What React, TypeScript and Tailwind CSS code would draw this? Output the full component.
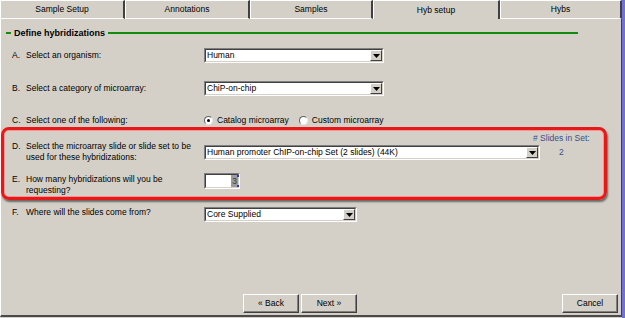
import React from "react";

function Arrow() {
  return (
    <div className="w-[12px] h-full flex-none bg-[#d4d0c8] border border-t-white border-l-white border-b-[#404040] border-r-[#404040] flex items-center justify-center">
      <svg width="7" height="4" viewBox="0 0 7 4">
        <path d="M0 0H7L3.5 4Z" fill="#000" />
      </svg>
    </div>
  );
}

function Sunken({ className, children }: { className: string; children: React.ReactNode }) {
  return (
    <div className={"flex-none border border-t-[#808080] border-l-[#808080] border-b-white border-r-white " + className}>
      <div className="h-full w-full flex border border-t-[#404040] border-l-[#404040] border-b-[#d4d0c8] border-r-[#d4d0c8] bg-white">
        {children}
      </div>
    </div>
  );
}

function Select({ className, value }: { className: string; value: string }) {
  return (
    <Sunken className={className}>
      <span className="flex-1 pl-[1px] text-[8.5px] leading-[11px] text-black self-center whitespace-nowrap overflow-hidden">
        {value}
      </span>
      <Arrow />
    </Sunken>
  );
}

function Label({ letter, children }: { letter: string; children: React.ReactNode }) {
  return (
    <div className="flex text-[8.5px] leading-[11px] text-black">
      <span className="w-[14px] flex-none">{letter}</span>
      <span className="whitespace-nowrap">{children}</span>
    </div>
  );
}

function Radio({ checked }: { checked: boolean }) {
  return (
    <div className="w-[9px] h-[9px] rounded-full bg-white border border-t-[#606060] border-l-[#606060] border-b-[#e8e8e8] border-r-[#e8e8e8] flex items-center justify-center flex-none">
      {checked && <div className="w-[3px] h-[3px] rounded-full bg-black" />}
    </div>
  );
}

function Button({ className, children }: { className: string; children: React.ReactNode }) {
  return (
    <div
      className={
        "h-[19px] flex-none flex items-center justify-center bg-[#d4d0c8] border border-t-white border-l-white border-b-[#404040] border-r-[#404040] shadow-[inset_-1px_-1px_0_#808080] text-[8.5px] text-black " +
        className
      }
    >
      {children}
    </div>
  );
}

export default function App() {
  return (
    <div className="w-[625px] h-[318px] flex bg-[#d4d0c8] font-['Liberation_Sans',Arial,sans-serif] overflow-hidden">
      <div className="w-[622px] h-full flex flex-col">
        {/* Tabs */}
        <div className="flex h-[19px] flex-none text-[8.5px] text-black">
          <div className="w-[125px] flex items-center justify-center border-t border-l border-b border-t-white border-l-white border-b-white border-r-2 border-r-[#404040]">
            Sample Setup
          </div>
          <div className="w-[125px] flex items-center justify-center border-t border-l border-b border-t-white border-l-white border-b-white border-r-2 border-r-[#404040]">
            Annotations
          </div>
          <div className="w-[123px] flex items-center justify-center border-t border-l border-b border-t-white border-l-white border-b-white border-r-2 border-r-[#404040]">
            Samples
          </div>
          <div className="w-[127px] flex items-center justify-center border-t border-l border-t-white border-l-white border-r-2 border-r-[#404040]">
            Hyb setup
          </div>
          <div className="w-[122px] flex items-center justify-center border-t border-l border-b border-t-white border-l-white border-b-white border-r-2 border-r-[#404040]">
            Hybs
          </div>
        </div>

        {/* Panel */}
        <div className="flex-1 mb-[1px] flex flex-col border-l border-l-white border-r border-r-[#404040] border-b-2 border-b-[#4a4a4a]">
          {/* Header */}
          <div className="mt-[8px] h-[12px] flex items-center">
            <div className="ml-[5px] w-[5px] h-[2px] bg-[#108a10]" />
            <span className="ml-[3px] text-[9px] font-bold text-black leading-[12px] whitespace-nowrap">
              Define hybridizations
            </span>
            <div className="ml-[3px] mr-[43px] flex-1 h-[2px] bg-[#108a10]" />
          </div>

          {/* A */}
          <div className="mt-[9px] h-[15px] flex items-center">
            <div className="w-[203px] pl-[11px] flex-none">
              <Label letter="A.">Select an organism:</Label>
            </div>
            <Select className="w-[180px] h-[15px]" value="Human" />
          </div>

          {/* B */}
          <div className="mt-[18px] h-[15px] flex items-center">
            <div className="w-[203px] pl-[11px] flex-none">
              <Label letter="B.">Select a category of microarray:</Label>
            </div>
            <Select className="w-[180px] h-[15px]" value="ChiP-on-chip" />
          </div>

          {/* C */}
          <div className="mt-[18px] h-[13px] flex items-center">
            <div className="w-[203px] pl-[11px] flex-none">
              <Label letter="C.">Select one of the following:</Label>
            </div>
            <div className="flex items-center text-[8.5px] text-black">
              <Radio checked />
              <span className="ml-[4px]">Catalog microarray</span>
              <div className="ml-[10px]">
                <Radio checked={false} />
              </div>
              <span className="ml-[4px]">Custom microarray</span>
            </div>
          </div>

          {/* Highlight box */}
          <div className="w-[606px] h-[73px] flex-none rounded-[8px] border-[3px] border-[#e81818] shadow-[1px_2px_2px_rgba(0,0,0,0.5),inset_0_0_0_1px_rgba(255,130,130,0.75)] flex flex-col">
            {/* D */}
            <div className="flex items-start">
              <div className="w-[200px] pl-[8px] flex-none mt-[11px]">
                <Label letter="D.">
                  Select the microarray slide or slide set to be
                  <br />
                  used for these hybridizations:
                </Label>
              </div>
              <Select className="w-[336px] h-[15px] mt-[15px]" value="Human promoter ChIP-on-chip Set (2 slides) (44K)" />
              <div className="ml-[-7px] mt-[3px] flex-none flex flex-col items-center text-[#34518c] text-[8.5px] leading-[11px]">
                <span className="whitespace-nowrap"># Slides in Set:</span>
                <span className="mt-[3px]">2</span>
              </div>
            </div>
            {/* E */}
            <div className="flex items-start">
              <div className="w-[200px] pl-[8px] flex-none mt-[11px]">
                <Label letter="E.">
                  How many hybridizations will you be
                  <br />
                  requesting?
                </Label>
              </div>
              <Sunken className="w-[36px] h-[16px] mt-[10px]">
                <div className="flex-1" />
                <div className="relative w-[7px] h-full bg-[#9c9c9c] flex items-center justify-center text-[8.5px] text-[#3a3a3a] leading-[10px]">
                  3
                  <div className="absolute right-[-1px] top-0 w-[2px] h-[2px] bg-[#2030ff]" />
                  <div className="absolute right-[-1px] bottom-0 w-[2px] h-[2px] bg-[#2030ff]" />
                </div>
              </Sunken>
            </div>
          </div>

          {/* F */}
          <div className="mt-[7px] flex items-start">
            <div className="w-[203px] pl-[11px] flex-none">
              <Label letter="F.">Where will the slides come from?</Label>
            </div>
            <Select className="w-[153px] h-[15px]" value="Core Supplied" />
          </div>

          {/* Buttons */}
          <div className="mt-auto mb-[2px] flex">
            <Button className="ml-[242px] w-[56px]">« Back</Button>
            <Button className="ml-[2px] w-[56px]">Next »</Button>
            <Button className="ml-auto mr-[3px] w-[56px]">Cancel</Button>
          </div>
        </div>
      </div>
      <div className="w-[3px] h-full bg-[#7272cc]" />
    </div>
  );
}
